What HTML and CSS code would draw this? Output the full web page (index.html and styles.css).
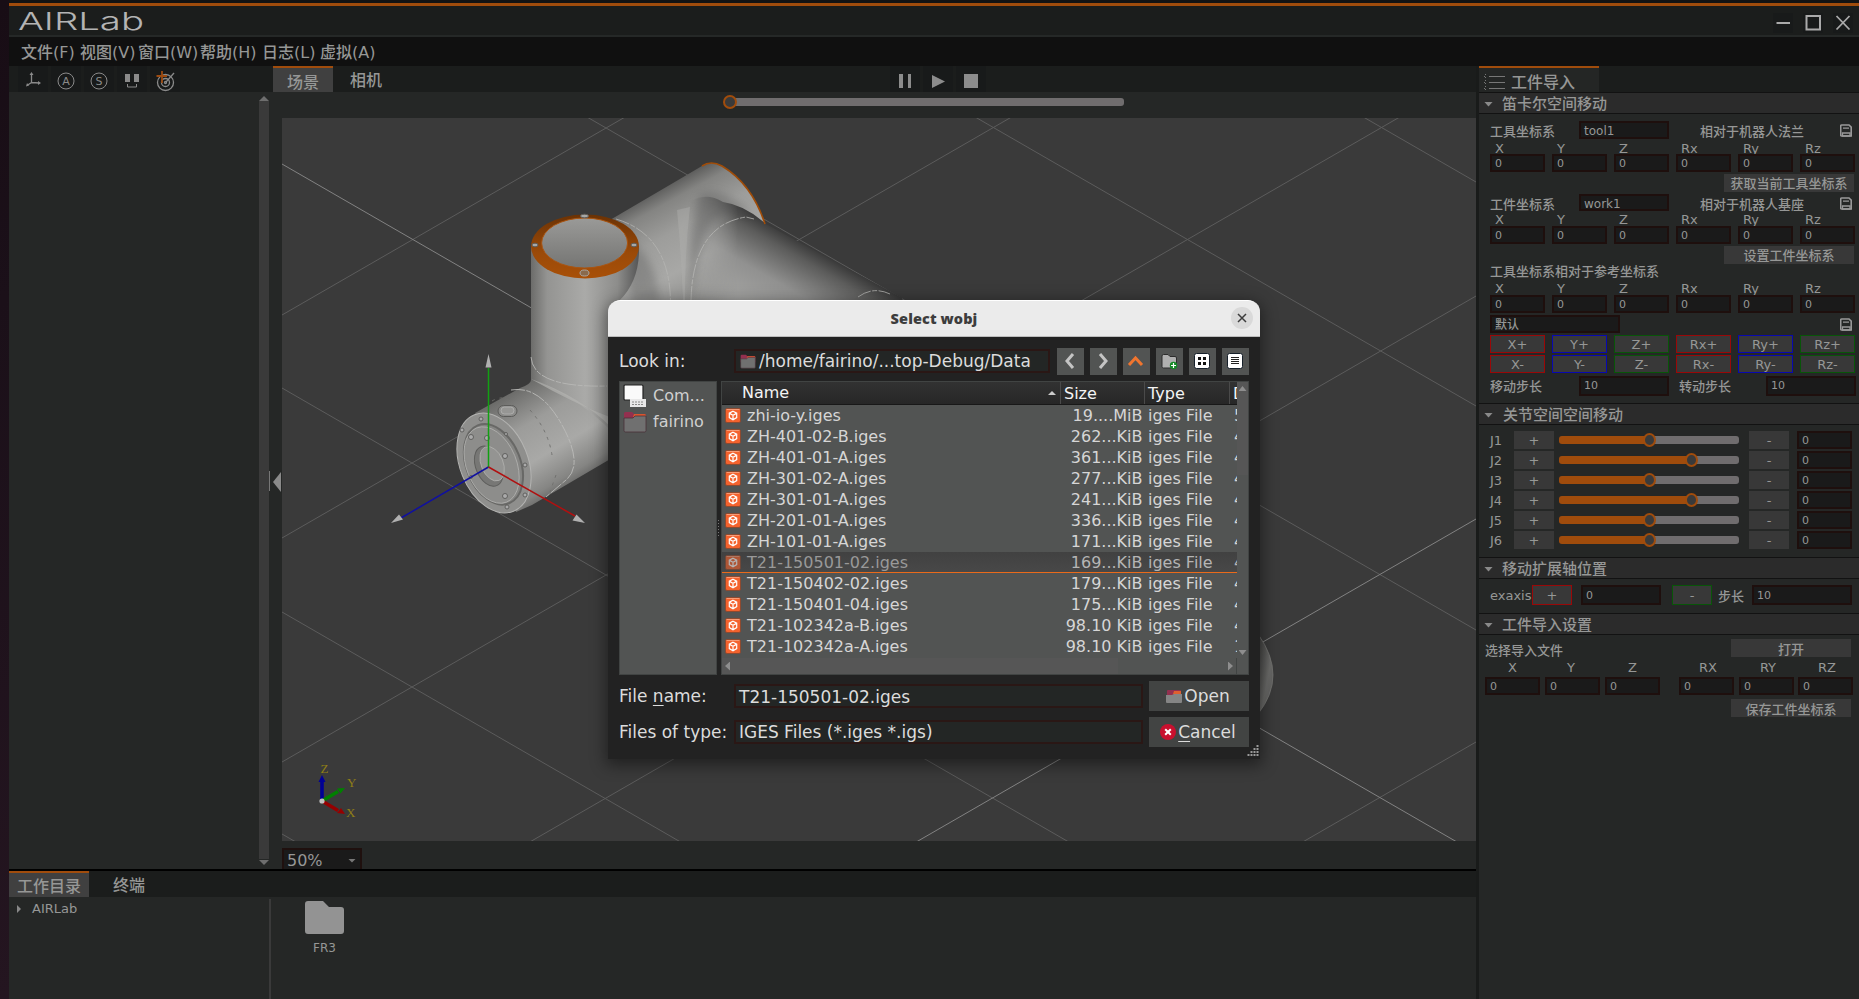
FILE: index.html
```html
<!DOCTYPE html>
<html lang="zh-CN">
<head>
<meta charset="utf-8">
<title>AIRLab</title>
<link rel="stylesheet" href="styles.css">
</head>
<body>
<svg width="0" height="0" class="defs">
  <defs>
    <symbol id="save" viewBox="0 0 12 13"><path d="M1.7 1h7.3l2.2 2.2V12H1.7A1 1 0 0 1 .7 11V2a1 1 0 0 1 1-1z" fill="none" stroke="#999" stroke-width="1.6"/><path d="M3 4.2h6M2.5 9h7.5v3H2.5z" stroke="#999" stroke-width="1.3" fill="none"/></symbol>
    <symbol id="iges" viewBox="0 0 16 15"><rect x=".5" y=".5" width="15" height="14" rx="1.5" fill="#f4622d" stroke="#8d4a30"/><path d="M1.5 1.5h13" stroke="#f79a75"/><path d="M8 3.2l3.7 2v4.4L8 11.8 4.300 9.600V5.200zM5 5.600l3 1.600 3-1.600M8 7.200v4" fill="none" stroke="#fff" stroke-width="1.200"/></symbol>
    <symbol id="folder" viewBox="0 0 24 22"><path d="M1 2.500Q1 1 2.500 1H9l2 2h10.500Q23 3 23 4.500V12H1z" fill="#93304f"/><path d="M11 3h10.500Q23 3 23 4.500V6H10z" fill="#d9552f"/><path d="M1 7h9l2-2h11v14.500q0 1.500-1.500 1.500h-19Q1 21 1 19.500z" fill="#707070" stroke="#4a3038" stroke-width=".8"/></symbol>
    <linearGradient id="cylV" x1="0" x2="1" y1="0" y2="0"><stop offset="0" stop-color="#6c6c6a"/><stop offset=".15" stop-color="#949492"/><stop offset=".5" stop-color="#aaaaa8"/><stop offset=".8" stop-color="#8d8d8b"/><stop offset="1" stop-color="#555"/></linearGradient>
    <linearGradient id="cylA" gradientUnits="userSpaceOnUse" x1="500" y1="400" x2="560" y2="500"><stop offset="0" stop-color="#6c6c6a"/><stop offset=".3" stop-color="#9c9c9a"/><stop offset=".6" stop-color="#a9a9a7"/><stop offset=".85" stop-color="#858583"/><stop offset="1" stop-color="#585857"/></linearGradient>
    <linearGradient id="cylB" gradientUnits="userSpaceOnUse" x1="656" y1="192" x2="715" y2="300"><stop offset="0" stop-color="#5f5f5e"/><stop offset=".12" stop-color="#848482"/><stop offset=".35" stop-color="#9d9d9b"/><stop offset=".65" stop-color="#a8a8a6"/><stop offset="1" stop-color="#8c8c8a"/></linearGradient>
    <linearGradient id="cylC" gradientUnits="userSpaceOnUse" x1="828" y1="256" x2="768" y2="360"><stop offset="0" stop-color="#383838"/><stop offset=".13" stop-color="#5c5c5b"/><stop offset=".4" stop-color="#919190"/><stop offset=".8" stop-color="#aaaaa8"/></linearGradient>
    <linearGradient id="fade" gradientUnits="userSpaceOnUse" x1="690" y1="0" x2="738" y2="0"><stop offset="0" stop-color="#000"/><stop offset="1" stop-color="#fff"/></linearGradient>
    <mask id="fadeIn" maskUnits="userSpaceOnUse" x="660" y="150" width="260" height="190"><rect x="660" y="150" width="260" height="190" fill="url(#fade)"/></mask>
    <linearGradient id="capG" x1="0" x2="0" y1="0" y2="1"><stop offset="0" stop-color="#9a9a98"/><stop offset="1" stop-color="#757573"/></linearGradient>
    <linearGradient id="ringG" x1="0" x2="0" y1="0" y2="1"><stop offset="0" stop-color="#6b3204"/><stop offset=".6" stop-color="#9b4a08"/><stop offset="1" stop-color="#a85008"/></linearGradient>
    <linearGradient id="ball" x1="0" x2="1" y1="0" y2="1"><stop offset="0" stop-color="#3e3e3d"/><stop offset=".6" stop-color="#6b6b69"/><stop offset="1" stop-color="#555"/></linearGradient>
    <filter id="soft" x="-50%" y="-50%" width="200%" height="200%"><feGaussianBlur stdDeviation="4"/></filter>
  </defs>
</svg>

<div class="app">
  <header class="titlebar">
    <svg class="logo" width="140" height="28" viewBox="0 0 140 28"><text x="0" y="24" textLength="126" lengthAdjust="spacingAndGlyphs">AIRLab</text></svg>
    <div class="winbtns">
      <span><svg width="20" height="20"><path d="M3.500 10h13.500" stroke="#aaa" stroke-width="2"/></svg></span>
      <span><svg width="20" height="20"><rect x="3.500" y="3" width="13.500" height="13.500" fill="none" stroke="#aaa" stroke-width="2"/></svg></span>
      <span><svg width="20" height="20"><path d="M3.500 3l13 13.500M16.500 3l-13 13.500" stroke="#aaa" stroke-width="1.800"/></svg></span>
    </div>
  </header>
  <nav class="menu"><span class="m1">文件(F)</span><span>视图(V)</span><span class="m3">窗口(W)</span><span class="m3">帮助(H)</span><span>日志(L)</span><span>虚拟(A)</span></nav>

  <div class="main">
    <div class="work">
      <div class="upper">
        <aside class="side">
          <div class="tools">
            <span><svg width="30" height="26"><g stroke="#8a8a8a" stroke-width="1.300" fill="none"><path d="M13.500 17V8M13.500 16.500l8 .5M13.500 16.500l-4.500 3"/></g><path d="M13.500 6l2 3h-4zM23 17l-3-2v4zM8 20.500l1-3.500 2 2.500z" fill="#8a8a8a"/></svg></span>
            <span><svg width="30" height="26"><circle cx="15" cy="15" r="8" fill="none" stroke="#8a8a8a"/><text x="15" y="19" class="glyph">A</text></svg></span>
            <span><svg width="30" height="26"><circle cx="15" cy="15" r="8" fill="none" stroke="#8a8a8a"/><text x="15" y="19" class="glyph">S</text></svg></span>
            <span><svg width="30" height="26"><path d="M8 8h5v8H8zM17 8h5v8h-5z" fill="#8a8a8a"/><path d="M10.500 18v3h9v-3" fill="none" stroke="#8a8a8a"/></svg></span>
            <span><svg width="30" height="26"><g fill="none" stroke="#8a8a8a" stroke-width="1.300"><circle cx="15.500" cy="16.500" r="8"/><circle cx="15.500" cy="16.500" r="4"/><circle cx="15.500" cy="16.500" r="1"/><path d="M16 16l8-9"/></g><path d="M12 5v12M6.500 10h10.500" stroke="#9c4a10" stroke-width="1.800"/></svg></span>
          </div>
          <div class="tree"><div class="vbar"><i class="up"></i><b></b><i class="down"></i></div></div>
        </aside>
        <section class="center">
          <div class="tabs">
            <span class="tab on">场景</span><span class="tab">相机</span>
            <div class="play">
              <span><svg width="30" height="26"><path d="M9 8h4v14H9zM18 8h3v14h-3z" fill="#8c8c8c"/></svg></span>
              <span><svg width="30" height="26"><path d="M9 9l13 6.500L9 22z" fill="#8c8c8c"/></svg></span>
              <span><svg width="30" height="26"><path d="M8 8h14v14H8z" fill="#8c8c8c"/></svg></span>
            </div>
          </div>
          <div class="timeline"><div class="track"><i class="knob"></i></div></div>
          <div class="viewrow">
            <div class="handle"><svg width="12" height="22"><path d="M.5 0v20" stroke="#777"/><path d="M12 1v20L4 11z" fill="#8a8a8a"/></svg></div>
            <svg class="view" viewBox="282 118 1194 723" width="1194" height="723">
              <g stroke="#5c5c5c" stroke-width="1">
                <path d="M282-507l1194 689M282-283l1194 689M282-59l1194 689M282 388l1194 689M282 612l1194 689M282 834l1194 689"/>
                <path d="M282 315l1194-689M282 538l1194-689M282 762l1194-689M282 985l1194-689M282 1431l1194-689"/>
                <path d="M282 164l1194 689M282 1208l1194-689" stroke="#828282"/>
              </g>
              <path d="M610 220L702 166Q711 160 722 166Q752 184 765 224L780 330H610z" fill="url(#cylB)"/>
              <path d="M676 212Q700 188 723 202Q745 205 766 224L902 298V330H690Q680 250 676 212z" fill="url(#cylC)" mask="url(#fadeIn)"/>
              <path d="M765 224L902 298V330H760z" fill="url(#cylC)"/>
              <path d="M700 194Q722 186 752 214Q726 206 712 222Q698 245 691 300Q686 240 700 194z" fill="#575756" opacity=".38" filter="url(#soft)"/>
              <path d="M683 300Q681 250 677 210L690 207Q685 250 685 300z" fill="#b0b0ae" opacity=".45"/>
              <path d="M620 234Q655 250 660 302H632z" fill="#4a4a49" opacity=".3" filter="url(#soft)"/>
              <path d="M702 166Q711 160 722 166Q752 184 765 224" fill="none" stroke="#a04c08" stroke-width="1.600"/>
              <path d="M616 219Q670 235 670.500 302M691 300Q693 225 746 217L754 219M858 297Q873 286 890 294" fill="none" stroke="#b5b5b3" stroke-width=".8" stroke-dasharray="14 1.500 5 1.500"/>
              <path d="M531 246V380L560 470 607 460 620 300Q640 280 639 246z" fill="url(#cylV)"/>
              <path d="M475 413L520 388Q532 384 531 379Q580 398 612 432V458L532 505 516 512z" fill="url(#cylA)"/>
              <path d="M531 379Q580 396 612 428V418Q575 404 531 379z" fill="#b3b3b1" opacity=".7"/>
              <path d="M531 357Q533 388 607 386" fill="none" stroke="#b8b8b6" stroke-width=".9" stroke-dasharray="14 1.500 5 1.500"/>
              <path d="M511 390Q540 385 562 425T566 480L546 497" fill="none" stroke="#bbbbb9" stroke-width=".9" stroke-dasharray="14 1.500 5 1.500"/>
              <path d="M492 401Q500 396 510 399M530 410Q548 430 552 455M556 475L550 492" fill="none" stroke="#6e6e6c" stroke-width=".9" stroke-dasharray="3 5"/>
              <g transform="rotate(-22 494 463)">
                <ellipse cx="494" cy="463" rx="34" ry="52" fill="#8f8f8d" stroke="#b4b4b2"/>
                <ellipse cx="493" cy="464" rx="27" ry="42" fill="#858583" stroke="#686866" stroke-width="2"/>
                <ellipse cx="491" cy="464" rx="25" ry="40" fill="#8d8d8b" stroke="#b0b0ae" stroke-width=".8"/>
                <ellipse cx="488" cy="464" rx="13" ry="21" fill="#777775" stroke="#5e5e5c"/>
                <ellipse cx="492" cy="463" rx="11" ry="18" fill="#949492" stroke="#b4b4b2" stroke-width=".7"/>
              </g>
              <g fill="#aaa" stroke="#5a5a58" stroke-width=".9"><circle cx="481" cy="419" r="2"/><circle cx="462" cy="430" r="2"/><circle cx="471" cy="437" r="2.500"/><circle cx="487" cy="438" r="2.500"/><circle cx="506" cy="434" r="1.500"/><circle cx="505" cy="456" r="2.500"/><circle cx="525" cy="465" r="2"/><circle cx="525" cy="495" r="2"/><circle cx="505" cy="496" r="2.500"/><circle cx="507" cy="507" r="2"/><circle cx="471" cy="477" r="1.500"/></g>
              <rect x="498" y="405.500" width="19" height="11" rx="5.500" fill="#8b8b89" stroke="#5c5c5a"/><rect x="501" y="407" width="13" height="7" rx="3.500" fill="#969694" stroke="#b9b9b7" stroke-width=".7"/>
              <ellipse cx="585" cy="246.500" rx="54" ry="32" fill="url(#ringG)"/>
              <ellipse cx="584.600" cy="243" rx="43" ry="25" fill="url(#capG)" stroke="#aa5410"/>
              <g fill="#a8a8a6" stroke="#5e5e5c"><ellipse cx="584.500" cy="216" rx="4" ry="1.800"/><ellipse cx="535" cy="245" rx="3" ry="1.800"/><ellipse cx="634" cy="245" rx="3" ry="1.800"/><ellipse cx="584.500" cy="273" rx="4.500" ry="3" fill="#8a6a4c" stroke="#a8a8a6"/></g>
              <path d="M1258 634Q1273 655 1273 675T1258 714z" fill="url(#ball)" stroke="#7b7b79" stroke-width=".7"/>
              <path d="M488.500 467V368" stroke="#12a012" stroke-width="1.500"/><path d="M488.500 467L401 518" stroke="#1010a0" stroke-width="1.500"/><path d="M488.500 467L575 516" stroke="#b01010" stroke-width="1.500"/>
              <path d="M488.500 354l3 13.500h-6zM391 523l8-8.500 4 5zM585 523l-8.500-8.500-4 6z" fill="#b0b0b0"/>
              <g stroke-width="3.600"><path d="M322 801V781" stroke="#000096"/><path d="M322 801l16-9.500" stroke="#008000"/><path d="M322 801l16 9.500" stroke="#960000"/></g>
              <path d="M322 775l3.500 7h-7z" fill="#000096"/><path d="M345 788l-8 .5 3.500 5z" fill="#008000"/><path d="M345 814l-8-1 4-5z" fill="#960000"/>
              <circle cx="322" cy="801" r="2.600" fill="#c0c0c0"/>
              <g class="axis"><text x="320.500" y="773">Z</text><text x="347" y="787">Y</text><text x="346" y="817">X</text></g>
            </svg>
          </div>
          <div class="status"><div class="zoom">50%<i></i></div></div>
        </section>
      </div>
      <div class="dock">
        <div class="docktabs"><span class="on">工作目录</span><span>终端</span></div>
        <div class="dockbody">
          <div class="dtree"><i></i>AIRLab</div>
          <div class="files"><div class="file"><svg width="39" height="33"><path d="M0 3q0-3 3-3h15l6 6h12q3 0 3 3v21q0 3-3 3H3q-3 0-3-3z" fill="#939393"/></svg>FR3</div></div>
        </div>
      </div>
    </div>

    <aside class="panel">
      <div class="ptabs"><div class="ptab"><svg width="22" height="16"><path d="M5 2.500h16M5 8.500h16M5 14.500h16" stroke="#777"/><path d="M0 2.500h2M0 8.500h2M0 14.500h2M1.500 0v16" stroke="#777" stroke-dasharray="1 2"/></svg>工件导入</div></div>
      <h3>笛卡尔空间移动</h3>
      <div class="body">
        <div class="row first"><label>工具坐标系</label><span class="in big">tool1</span><label class="rel">相对于机器人法兰</label><svg class="save"><use href="#save"/></svg></div>
        <div class="six cap c1"><span>X</span><span>Y</span><span>Z</span><span>Rx</span><span>Ry</span><span>Rz</span></div>
        <div class="six"><span class="in">0</span><span class="in">0</span><span class="in">0</span><span class="in">0</span><span class="in">0</span><span class="in">0</span></div>
        <div class="right"><button>获取当前工具坐标系</button></div>
        <div class="row second"><label>工件坐标系</label><span class="in big">work1</span><label class="rel">相对于机器人基座</label><svg class="save"><use href="#save"/></svg></div>
        <div class="six cap c2"><span>X</span><span>Y</span><span>Z</span><span>Rx</span><span>Ry</span><span>Rz</span></div>
        <div class="six"><span class="in">0</span><span class="in">0</span><span class="in">0</span><span class="in">0</span><span class="in">0</span><span class="in">0</span></div>
        <div class="right"><button>设置工件坐标系</button></div>
        <div class="ref">工具坐标系相对于参考坐标系</div>
        <div class="six cap c3"><span>X</span><span>Y</span><span>Z</span><span>Rx</span><span>Ry</span><span>Rz</span></div>
        <div class="six"><span class="in">0</span><span class="in">0</span><span class="in">0</span><span class="in">0</span><span class="in">0</span><span class="in">0</span></div>
        <div class="row def"><span class="in">默认</span><svg class="save"><use href="#save"/></svg></div>
        <div class="six jog"><button class="r">X+</button><button class="b">Y+</button><button class="g">Z+</button><button class="r">Rx+</button><button class="b">Ry+</button><button class="g">Rz+</button><button class="r">X-</button><button class="b">Y-</button><button class="g">Z-</button><button class="r">Rx-</button><button class="b">Ry-</button><button class="g">Rz-</button></div>
        <div class="row step"><label>移动步长</label><span class="in">10</span><label class="l2">转动步长</label><span class="in">10</span></div>
      </div>
      <h3 class="wide">关节空间空间移动</h3>
      <div class="joints">
        <div><label>J1</label><button>+</button><div class="bar"><i></i></div><button>-</button><span class="in">0</span></div>
        <div><label>J2</label><button>+</button><div class="bar hi"><i></i></div><button>-</button><span class="in">0</span></div>
        <div><label>J3</label><button>+</button><div class="bar"><i></i></div><button>-</button><span class="in">0</span></div>
        <div><label>J4</label><button>+</button><div class="bar hi"><i></i></div><button>-</button><span class="in">0</span></div>
        <div><label>J5</label><button>+</button><div class="bar"><i></i></div><button>-</button><span class="in">0</span></div>
        <div><label>J6</label><button>+</button><div class="bar"><i></i></div><button>-</button><span class="in">0</span></div>
      </div>
      <h3>移动扩展轴位置</h3>
      <div class="ext"><label>exaxis</label><button class="r">+</button><span class="in e1">0</span><button class="g">-</button><label class="st">步长</label><span class="in e2">10</span></div>
      <h3>工件导入设置</h3>
      <div class="imp">
        <div class="irow"><label>选择导入文件</label><button>打开</button></div>
        <div class="sixb capb"><span>X</span><span class="y">Y</span><span>Z</span><span>RX</span><span>RY</span><span>RZ</span></div>
        <div class="sixb"><span class="in">0</span><span class="in">0</span><span class="in">0</span><span class="in">0</span><span class="in">0</span><span class="in">0</span></div>
        <div class="irow last"><button>保存工件坐标系</button></div>
      </div>
    </aside>
  </div>
</div>

<div class="dialog">
  <div class="dtitle"><b>Select wobj</b><span><svg width="22" height="22"><path d="M7 7l8 8M15 7l-8 8" stroke="#3c3c3c" stroke-width="1.500"/></svg></span></div>
  <div class="dbody">
    <div class="look"><label>Look in:</label>
      <div class="fin path"><svg width="16" height="15"><use href="#folder"/></svg>/home/fairino/...top-Debug/Data</div>
      <div class="nav">
        <span><svg width="27" height="27"><path d="M16 6l-6 7 6 7" fill="none" stroke="#c4c4c4" stroke-width="3"/></svg></span>
        <span><svg width="27" height="27"><path d="M10 6l6 7-6 7" fill="none" stroke="#c4c4c4" stroke-width="3"/></svg></span>
        <span><svg width="27" height="27"><path d="M6 17l6.500-7 6.500 7" fill="none" stroke="#f0752f" stroke-width="3"/></svg></span>
        <span><svg width="27" height="27"><path d="M6 8q0-1.500 1.500-1.500H12l2 2h5q1.500 0 1.500 1.500v8.500q0 1.500-1.500 1.500H7.500Q6 20 6 18.500z" fill="#b0b0b0" stroke="#2d2d2d"/><circle cx="17.500" cy="17.500" r="3.700" fill="#138a25"/><path d="M17.500 15v5M15 17.500h5" stroke="#fff" stroke-width="1.200"/></svg></span>
        <span><svg width="27" height="27"><rect x="5.500" y="5.500" width="15" height="15" rx="2" fill="#fff" stroke="#16202a"/><path d="M9 9h3v3H9zM14 9h3v3h-3zM9 14h3v3H9zM14 14h3v3h-3z" fill="#111"/></svg></span>
        <span><svg width="27" height="27"><rect x="5.500" y="5.500" width="15" height="15" rx="2" fill="#fff" stroke="#16202a"/><path d="M9 9.500h8M9 11.500h8M9 13.500h8M9 15.500h8" stroke="#222"/></svg></span>
      </div>
    </div>
    <div class="lists">
      <div class="places">
        <div><svg width="24" height="24"><rect x="1" y="1" width="19" height="15" rx="1" fill="#fafafa" stroke="#222" stroke-width="1.200"/><path d="M7 15h16v8H7z" fill="#e8e8e8"/><path d="M9 18h12M9 20.500h12" stroke="#888" stroke-dasharray="2 1"/></svg>Com...</div>
        <div><svg width="24" height="22"><use href="#folder"/></svg>fairino</div>
      </div>
      <div class="grip"></div>
      <div class="table">
        <div class="thead"><span class="n">Name<i></i></span><span class="s">Size</span><span class="t">Type</span><span class="d">D</span></div>
        <div class="rows">
          <div><svg><use href="#iges"/></svg><span class="n">zhi-io-y.iges</span><span class="s">19....MiB</span><span class="t">iges File</span><span class="d">5</span></div>
          <div><svg><use href="#iges"/></svg><span class="n">ZH-401-02-B.iges</span><span class="s">262...KiB</span><span class="t">iges File</span><span class="d">4</span></div>
          <div><svg><use href="#iges"/></svg><span class="n">ZH-401-01-A.iges</span><span class="s">361...KiB</span><span class="t">iges File</span><span class="d">4</span></div>
          <div><svg><use href="#iges"/></svg><span class="n">ZH-301-02-A.iges</span><span class="s">277...KiB</span><span class="t">iges File</span><span class="d">4</span></div>
          <div><svg><use href="#iges"/></svg><span class="n">ZH-301-01-A.iges</span><span class="s">241...KiB</span><span class="t">iges File</span><span class="d">4</span></div>
          <div><svg><use href="#iges"/></svg><span class="n">ZH-201-01-A.iges</span><span class="s">336...KiB</span><span class="t">iges File</span><span class="d">4</span></div>
          <div><svg><use href="#iges"/></svg><span class="n">ZH-101-01-A.iges</span><span class="s">171...KiB</span><span class="t">iges File</span><span class="d">4</span></div>
          <div class="sel"><svg><use href="#iges"/></svg><span class="n">T21-150501-02.iges</span><span class="s">169...KiB</span><span class="t">iges File</span><span class="d">4</span></div>
          <div><svg><use href="#iges"/></svg><span class="n">T21-150402-02.iges</span><span class="s">179...KiB</span><span class="t">iges File</span><span class="d">4</span></div>
          <div><svg><use href="#iges"/></svg><span class="n">T21-150401-04.iges</span><span class="s">175...KiB</span><span class="t">iges File</span><span class="d">4</span></div>
          <div><svg><use href="#iges"/></svg><span class="n">T21-102342a-B.iges</span><span class="s">98.10 KiB</span><span class="t">iges File</span><span class="d">4</span></div>
          <div><svg><use href="#iges"/></svg><span class="n">T21-102342a-A.iges</span><span class="s">98.10 KiB</span><span class="t">iges File</span><span class="d">1</span></div>
        </div>
        <div class="vs"><i class="up"></i><b></b><i class="down"></i></div>
        <div class="hs"><i class="lf"></i><b></b><i class="rt"></i></div>
      </div>
    </div>
    <div class="frow"><label>File <u>n</u>ame:</label><div class="fin fn">T21-150501-02.iges</div><button><svg width="16" height="15"><path d="M1 2q0-1 1-1h12q1 0 1 1v4H1z" fill="#93304f"/><path d="M8 2h7v3H7z" fill="#e06030"/><path d="M0 6h6l2-1h8v8q0 1-1 1H1q-1 0-1-1z" fill="#858585"/></svg>Open</button></div>
    <div class="frow"><label>Files of type:</label><div class="fin">IGES Files (*.iges *.igs)</div><button><svg width="16" height="16"><circle cx="8" cy="8" r="8" fill="#c8102e"/><path d="M5.200 5.200l5.600 5.600M10.800 5.200l-5.600 5.600" stroke="#fff" stroke-width="2"/></svg><span><u>C</u>ancel</span></button></div>
    <svg class="size" width="12" height="12"><path d="M10.500 0v12M7.500 3v9M4.500 6v6M1.500 9v3" stroke="#999" stroke-width="2" stroke-dasharray="2 1"/></svg>
  </div>
</div>
</body>
</html>
```
FILE: styles.css
```css
* { box-sizing: border-box; }
body { margin: 0; width: 1859px; height: 999px; overflow: hidden; background: linear-gradient(#180d15, #1b1019 30%, #241520); font-family: "DejaVu Sans", "Noto Sans CJK SC", sans-serif; color: #969796; font-size: 13px; }
.defs { position: absolute; }
svg { display: block; flex: none; }
button { font: inherit; color: inherit; border: 0; padding: 0; background: #383838; display: block; text-align: center; }
.app { height: 999px; border-top: 3px solid #131313; margin-left: 9px; display: flex; flex-direction: column; font-weight: 500; }
.titlebar { height: 34px; flex: none; border-top: 3px solid #a04c0c; border-bottom: 2px solid #252827; background: #1b1d1c; display: flex; justify-content: space-between; }
.logo { margin: 0 0 0 9px; overflow: visible; }
.logo text { font-family: Inter, sans-serif; font-size: 24.5px; font-weight: 300; fill: #b4b4b4; }
.winbtns { display: flex; gap: 10px; padding: 7px 6px 0 0; }
.winbtns span { width: 20px; height: 20px; background: #181a1a; }
.menu { height: 29px; flex: none; background: #101010; display: flex; padding-left: 12px; font-size: 16px; line-height: 31px; }
.menu span { width: 58px; white-space: nowrap; }
.menu .m1 { width: 59px; }
.menu .m3 { width: 62px; }
.main { flex: 1; display: flex; min-height: 0; }
.work { width: 1467px; display: flex; flex-direction: column; }
.upper { display: flex; height: 803px; }
.side { width: 264px; background: #252726; }
.tools { height: 26px; background: #1b1d1c; display: flex; gap: 3px; padding-left: 9px; }
.tools span, .play span { width: 30px; height: 26px; background: #181a1a; }
.glyph { font: 11px "DejaVu Sans"; fill: #8a8a8a; text-anchor: middle; }
.tree { height: 777px; display: flex; justify-content: flex-end; padding: 4px 4px 4px 0; }
.vbar { width: 10px; display: flex; flex-direction: column; background: linear-gradient(#252726 5px, #3a3a3a 5px, #3a3a3a 763px, #252726 763px); }
.vbar b { flex: 1; }
.up, .down { width: 10px; height: 5px; background: #6e6e6e; clip-path: polygon(50% 0, 100% 100%, 0 100%); }
.down { clip-path: polygon(0 0, 100% 0, 50% 100%); }
.center { width: 1203px; display: flex; flex-direction: column; background: #252726; }
.tabs { height: 26px; background: #1b1d1c; display: flex; font-size: 16px; line-height: 30px; text-align: center; }
.tab { width: 60px; }
.tab + .tab { width: 66px; }
.on { background: #404040; border-top: 2px solid #a04c0c; line-height: 29px; }
.play { display: flex; gap: 3px; margin-left: 491px; }
.timeline { height: 26px; padding: 6px 0 0 452px; }
.track { width: 399px; height: 8px; background: #706d6e; border-radius: 3px; display: flex; align-items: center; }
.knob { width: 14px; height: 14px; margin-left: -2px; border-radius: 50%; border: 2px solid #a04c0c; background: #3a3a3a; }
.viewrow { display: flex; height: 723px; }
.handle { width: 9px; padding-top: 353px; overflow: visible; }
.handle svg { margin-left: -4px; }
.view { background: #3a3a3a; }
.axis { font: 13px "Liberation Serif", serif; fill: #8f7e16; }
.status { height: 28px; padding: 7px 0 0 9px; }
.zoom { width: 80px; height: 21px; background: #1a1a1a; border: 2px solid #1f100e; border-bottom: 0; font-size: 16px; line-height: 21px; padding: 2px 4px 0 3px; display: flex; justify-content: space-between; align-items: center; }
.zoom i { width: 8px; height: 4px; background: #777; clip-path: polygon(0 0, 100% 0, 50% 100%); }
.dock { flex: 1; border-top: 2px solid #000; background: #252726; display: flex; flex-direction: column; }
.docktabs { height: 26px; background: #1b1d1c; display: flex; font-size: 16px; line-height: 29px; }
.docktabs span { width: 80px; text-align: center; }
.docktabs .on { line-height: 27px; }
.dockbody { flex: 1; display: flex; padding-top: 2px; }
.dtree { width: 262px; border-right: 2px solid #3a3a3a; display: flex; gap: 11px; padding-left: 8px; height: 100px; line-height: 19px; }
.dtree i { width: 4px; height: 8px; background: #888; margin-top: 6px; clip-path: polygon(0 0, 100% 50%, 0 100%); }
.file { width: 107px; display: flex; flex-direction: column; align-items: center; gap: 7px; padding-top: 2px; font-size: 12px; }
.panel { width: 383px; border-left: 3px solid #191b1a; background: #252726; }
.ptabs { height: 26px; background: #1b1d1c; }
.ptab { width: 120px; height: 26px; border-top: 2px solid #a04c0c; background: #242625; display: flex; gap: 5px; padding-left: 5px; font-size: 16px; line-height: 29px; }
.ptab svg { margin-top: 6px; }
.panel h3 { margin: 0; height: 22px; border: 1px solid #121212; border-width: 1px 0; background: #2b2b2b; font-weight: 500; font-size: 15px; line-height: 23px; display: flex; align-items: center; gap: 9px; padding: 2px 0 0 5px; }
.panel h3::before { content: ""; width: 9px; height: 5px; background: #8a8a8a; clip-path: polygon(0 0, 100% 0, 50% 100%); }
.panel h3.wide { gap: 10px; }
.in { display: block; width: 55px; height: 18px; border: 2px solid #1e0f0d; background: #1a1a1a; font-size: 11px; line-height: 15px; padding-left: 3px; white-space: nowrap; }
.body { height: 289px; padding: 7px 0 0 11px; }
.row { display: flex; height: 18px; line-height: 21px; }
.row label { width: 89px; flex: none; white-space: nowrap; }
.row .big { width: 90px; font-size: 12px; line-height: 16px; }
.row .rel { margin-left: 31px; width: 140px; }
.save { width: 12px; height: 13px; margin-top: 3px; }
.six { display: grid; grid-template-columns: repeat(6, 55px); gap: 2px 7px; }
.cap { padding-left: 5px; }
.cap span { height: 15px; }
.c1 { height: 15px; line-height: 20px; }
.c2 { height: 15px; line-height: 18px; }
.c3 { height: 15px; line-height: 18px; }
.right { padding: 2px 5px 0 0; height: 20px; display: flex; justify-content: flex-end; }
.right button { width: 130px; height: 18px; line-height: 20px; }
.second { margin-top: 2px; height: 17px; line-height: 22px; }
.second .in { height: 17px; }
.ref { height: 16px; line-height: 16px; }
.def { margin-top: 2px; justify-content: space-between; padding-right: 7px; }
.def .in { width: 130px; font-size: 12px; line-height: 16px; }
.jog { margin-top: 2px; }
.jog button { height: 18px; line-height: 17px; }
.r { border: 1px solid #9a0808; }
.b { border: 1px solid #0808b0; }
.g { border: 1px solid #085508; }
.step { margin-top: 3px; height: 20px; line-height: 22px; }
.step .in { width: 90px; height: 20px; line-height: 16px; }
.step .l2 { margin-left: 10px; width: 87px; }
.joints { height: 132px; padding: 6px 0 0 11px; display: flex; flex-direction: column; gap: 2px; }
.joints > div { display: flex; height: 18px; line-height: 20px; }
.joints label { width: 24px; }
.joints button { width: 40px; }
.bar { width: 180px; height: 8px; margin: 5px 10px 0 5px; border-radius: 3px; background: linear-gradient(90deg, #a04c0c 50%, #706d6e 50%); display: flex; align-items: center; }
.bar.hi { background: linear-gradient(90deg, #a04c0c 73%, #706d6e 73%); }
.bar i { width: 13px; height: 14px; flex: none; margin-left: 84px; border: 2px solid #a04c0c; border-radius: 50%; background: #3a3a3a; }
.bar.hi i { margin-left: 126px; }
.joints .in { margin-left: 8px; }
.ext { height: 34px; padding: 6px 0 0 11px; display: flex; line-height: 22px; }
.ext label { width: 42px; }
.ext button { width: 40px; height: 20px; line-height: 19px; }
.ext .in { height: 20px; line-height: 17px; }
.ext .e1 { width: 80px; margin: 0 11px 0 9px; }
.ext .st { width: 26px; margin: 0 8px 0 6px; line-height: 23px; }
.ext .e2 { width: 100px; }
.imp { padding: 4px 8px 0 6px; }
.irow { display: flex; justify-content: space-between; height: 18px; line-height: 23px; }
.irow button { width: 120px; height: 18px; line-height: 21px; }
.last { justify-content: flex-end; margin-top: 4px; }
.sixb { display: grid; grid-template-columns: 60px 60px 74px 60px 59px 55px; }
.capb { height: 20px; line-height: 22px; }
.capb span { width: 55px; text-align: center; }
.capb .y { padding-right: 3px; }
.capb span:nth-child(n+4) { padding-left: 3px; }

.dialog { position: absolute; left: 608px; top: 300px; width: 652px; height: 459px; border-radius: 12px 12px 0 0; background: #222; box-shadow: 0 4px 16px 2px rgba(0,0,0,.45); color: #dcdcdc; font-size: 17px; }
.dtitle { height: 37px; border-radius: 12px 12px 0 0; background: #ebebeb; border-bottom: 1px solid #bdbdbd; border-top: 1px solid #fff; color: #3d3d3d; font: 700 14.500px/34px "Noto Sans", sans-serif; letter-spacing: .1px; display: grid; grid-template-columns: 1fr auto 1fr; padding-right: 7px; }
.dtitle::before { content: ""; }
.dtitle b { margin-left: 7px; }
.dtitle span { width: 22px; height: 22px; border-radius: 50%; background: #d9d9d9; margin-top: 6px; justify-self: end; }
.dbody { padding: 11px 11px 0; }
.look { display: flex; height: 27px; line-height: 26px; }
.look label { width: 115px; }
.fin { border: 2px solid #2a1715; background: #232625; height: 24px; line-height: 20px; padding-left: 3px; white-space: nowrap; }
.fin.fn { line-height: 22px; }
.path { width: 316px; margin: 1px 7px 0 0; display: flex; align-items: center; gap: 3px; padding-left: 4px; }
.nav { display: flex; gap: 6px; }
.nav span { width: 27px; height: 27px; background: #525453; }
.lists { display: flex; height: 294px; margin-top: 6px; font-size: 16px; }
.places { width: 98px; background: #525453; border: 1px solid #414443; padding: 1px 3px; }
.places div { display: flex; align-items: center; gap: 6px; height: 26px; line-height: 24px; color: #d0d0d0; }
.grip { width: 4px; background: radial-gradient(#777 35%, transparent 40%) 0 141px / 3px 3px repeat-y; clip-path: inset(138px 0 138px 0); }
.table { width: 528px; border: 1px solid #414443; background: #525453; display: grid; grid-template-columns: 1fr 11px; grid-template-rows: 23px 253px 16px; overflow: hidden; }
.thead { background: linear-gradient(#323232, #272727); border-bottom: 1px solid #181818; display: flex; color: #f4f4f4; line-height: 24px; overflow: hidden; height: 23px; }
.thead span { border-right: 1px solid #4a4a4a; flex: none; white-space: nowrap; }
.thead .n { width: 339px; padding-left: 20px; display: flex; align-items: center; justify-content: space-between; padding-right: 4px; }
.thead i { width: 8px; height: 4px; background: #ccc; clip-path: polygon(50% 0, 100% 100%, 0 100%); }
.thead .s { width: 84px; padding-left: 3px; }
.thead .t { width: 85px; padding-left: 3px; }
.thead .d { width: 24px; padding-left: 3px; }
.rows { overflow: hidden; height: 253px; }
.rows div { width: 515px; height: 21px; display: flex; line-height: 21px; color: #d6d6d6; overflow: hidden; white-space: nowrap; padding-left: 3px; }
.rows svg { width: 16px; height: 15px; margin: 3px 6px 0 0; }
.rows .n { width: 300px; flex: none; }
.rows .s { width: 95.500px; text-align: right; flex: none; }
.rows .t { width: 85px; flex: none; padding-left: 5.500px; }
.rows .d { padding-left: 6.500px; flex: none; }
.rows .sel { background: linear-gradient(#414141, #484848); border-bottom: 1px solid #ea6a1a; color: #b5b5b5; }
.sel .n { color: #999; }
.sel svg { opacity: .6; }
.vs { grid-column: 2; grid-row: 1 / 3; display: flex; flex-direction: column; align-items: center; background: linear-gradient(#565656 93px, #525453 93px); padding: 4px 0 3px; }
.vs b, .hs b { flex: 1; }
.vs i { width: 8px; background: #8e8e8e; }
.hs { grid-column: 1; display: flex; align-items: center; padding: 0 3px; background: linear-gradient(90deg, #565656 77%, #525453 77%); border-right: 1px solid #414443; }
.hs i { width: 5px; height: 9px; background: #8e8e8e; clip-path: polygon(0 50%, 100% 0, 100% 100%); }
.hs .rt { clip-path: polygon(0 0, 100% 50%, 0 100%); }
.frow { display: flex; height: 30px; margin-top: 6px; line-height: 30px; align-items: center; }
.frow label { width: 115px; white-space: nowrap; }
.frow .fin { width: 409px; margin-right: 6px; }
.frow button { width: 100px; height: 30px; background: #424443; display: flex; justify-content: center; align-items: center; gap: 2px; padding-right: 2px; }
u { text-decoration-thickness: 1px; text-underline-offset: 3px; }
.size { position: absolute; right: 1px; bottom: 2px; }
```
